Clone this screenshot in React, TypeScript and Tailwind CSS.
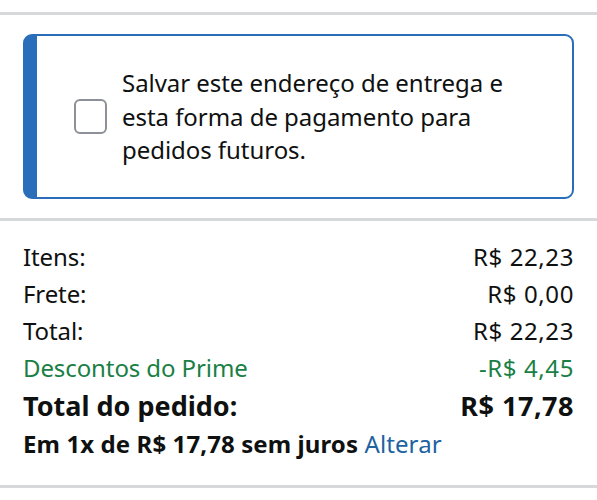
import React from "react";

export default function App() {
  const rows = [
    { l: "Itens:", r: "R$ 22,23", green: false },
    { l: "Frete:", r: "R$ 0,00", green: false },
    { l: "Total:", r: "R$ 22,23", green: false },
    { l: "Descontos do Prime", r: "-R$ 4,45", green: true },
  ];
  return (
    <div
      className="w-[597px] h-[500px] bg-white overflow-hidden text-[#0f1111]"
      style={{ fontFamily: '"Noto Sans", "Open Sans", sans-serif' }}
    >
      <div className="h-[12px]" />
      <div className="h-[3px] bg-[#d5d9d9]" />
      <div className="px-[23px] pt-[19px] pb-[19px]">
        <div className="flex h-[165px] rounded-[9px] border-2 border-l-[14px] border-[#2a6ebb] items-center pl-[37px] pr-4">
          <div className="w-[33px] h-[35px] rounded-[6px] border-2 border-[#8d9096] bg-white shrink-0" />
          <div className="ml-[15px] text-[24px] leading-[33.5px] tracking-[-0.05px]">
            Salvar este endereço de entrega e
            <br />
            esta forma de pagamento para
            <br />
            pedidos futuros.
          </div>
        </div>
      </div>
      <div className="h-[3px] bg-[#d5d9d9]" />
      <div className="px-[23px] pt-[17px]">
        {rows.map((r) => (
          <div
            key={r.l}
            className={`flex justify-between text-[24px] leading-[37px] ${
              r.green ? "text-[#1a7f45]" : ""
            }`}
          >
            <span className="tracking-[-0.1px]">{r.l}</span>
            <span className="tracking-[0.6px]">{r.r}</span>
          </div>
        ))}
        <div className="flex justify-between text-[27px] leading-[40px] font-bold">
          <span>Total do pedido:</span>
          <span className="tracking-[0.5px]">R$ 17,78</span>
        </div>
        <div className="text-[24px] leading-[36px] font-bold tracking-[0.1px]">
          Em 1x de R$ 17,78 sem juros{" "}
          <span className="font-normal text-[#2162a1]">Alterar</span>
        </div>
      </div>
      <div className="mt-[23px] h-[3px] bg-[#d5d9d9]" />
    </div>
  );
}
